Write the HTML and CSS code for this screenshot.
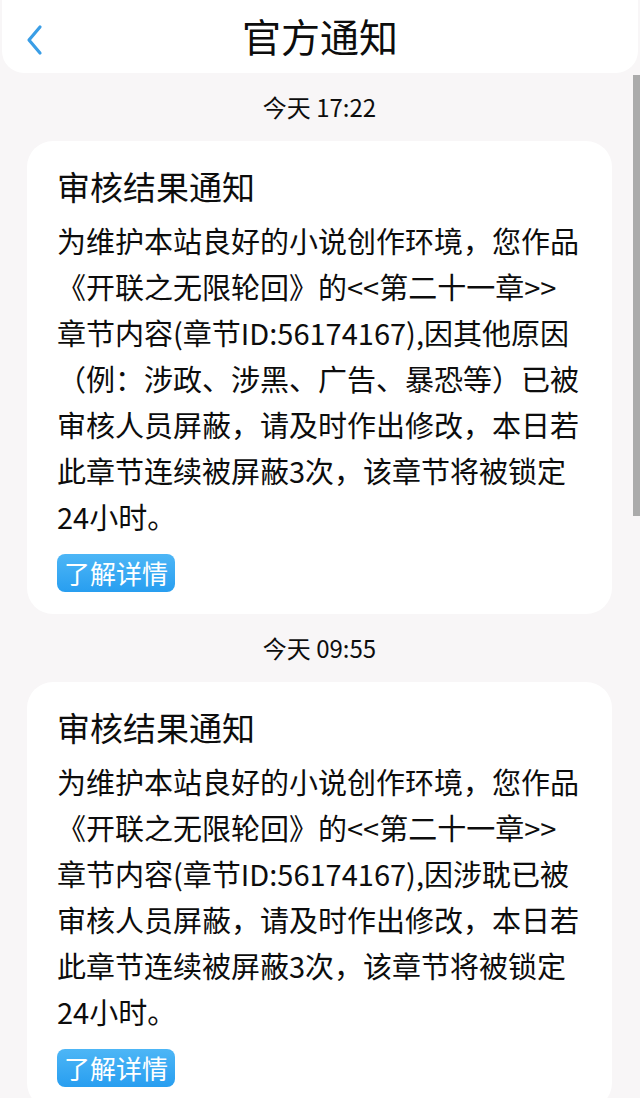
FILE: index.html
```html
<!DOCTYPE html>
<html lang="zh-CN">
<head>
    <meta charset="UTF-8">
    <title>官方通知</title>
    <link rel="stylesheet" href="styles.css">
</head>
<body>
<div class="header">
    <span class="back">
        <svg width="20" height="32" viewBox="0 0 20 32">
            <polyline points="15,3 4,16 15,29" fill="none" stroke="#3a9ee6" stroke-width="3.2" stroke-linecap="round" stroke-linejoin="round"/>
        </svg>
    </span>
    <h1>官方通知</h1>
</div>

<div class="list">
    <div class="time">今天 17:22</div>
    <div class="card">
        <div class="title">审核结果通知</div>
        <p class="text">为维护本站良好的小说创作环境，您作品<br>《开联之无限轮回》的&lt;&lt;第二十一章&gt;&gt;<br>章节内容(章节ID:56174167),因其他原因<br>（例：涉政、涉黑、广告、暴恐等）已被<br>审核人员屏蔽，请及时作出修改，本日若<br>此章节连续被屏蔽3次，该章节将被锁定<br>24小时。</p>
        <span class="btn">了解详情</span>
    </div>

    <div class="time">今天 09:55</div>
    <div class="card">
        <div class="title">审核结果通知</div>
        <p class="text">为维护本站良好的小说创作环境，您作品<br>《开联之无限轮回》的&lt;&lt;第二十一章&gt;&gt;<br>章节内容(章节ID:56174167),因涉耽已被<br>审核人员屏蔽，请及时作出修改，本日若<br>此章节连续被屏蔽3次，该章节将被锁定<br>24小时。</p>
        <span class="btn">了解详情</span>
    </div>
</div>

<div class="scrollbar"></div>
</body>
</html>
```

FILE: styles.css
```css
*{
    margin: 0;
    padding: 0;
}
body{
    background-color: #f8f6f7;
    font-family: "Noto Sans CJK SC", "Noto Sans", sans-serif;
    color: #0d0d0d;
    overflow: hidden;
}
.header{
    height: 73px;
    margin: 0 2px;
    background-color: #fff;
    border-radius: 0 0 22px 22px;
    display: flex;
    align-items: center;
    justify-content: center;
    position: relative;
}
.header h1{
    font-size: 39px;
    font-weight: normal;
    line-height: 73px;
    margin-top: -2px;
}
.header .back{
    position: absolute;/*返回按钮压在标题栏左侧*/
    left: 23px;
    top: 24px;
    width: 20px;
    height: 32px;
}
.list{
    padding: 0 28px 0 27px;
}
.time{
    font-size: 24px;
    line-height: 30px;
    text-align: center;
    padding: 19px 0 19px;
}
.card{
    background-color: #fff;
    border-radius: 26px;
    padding: 22px 10px 22px 30px;
}
.card .title{
    font-size: 33px;
    line-height: 46px;
    margin-bottom: 8px;
}
.card .text{
    font-size: 29px;
    line-height: 46px;
    white-space: nowrap;
}
.card .btn{
    display: inline-block;
    margin-top: 15px;
    height: 38px;
    line-height: 38px;
    padding: 0 7px;
    font-size: 26px;
    color: #fff;
    border-radius: 8px;
    background: linear-gradient(#4db6f6, #289ef0);
}
.scrollbar{
    position: fixed;/*滚动条浮在内容上*/
    right: 0;
    top: 75px;
    width: 7px;
    height: 441px;
    background-color: #ababab;
}
```
